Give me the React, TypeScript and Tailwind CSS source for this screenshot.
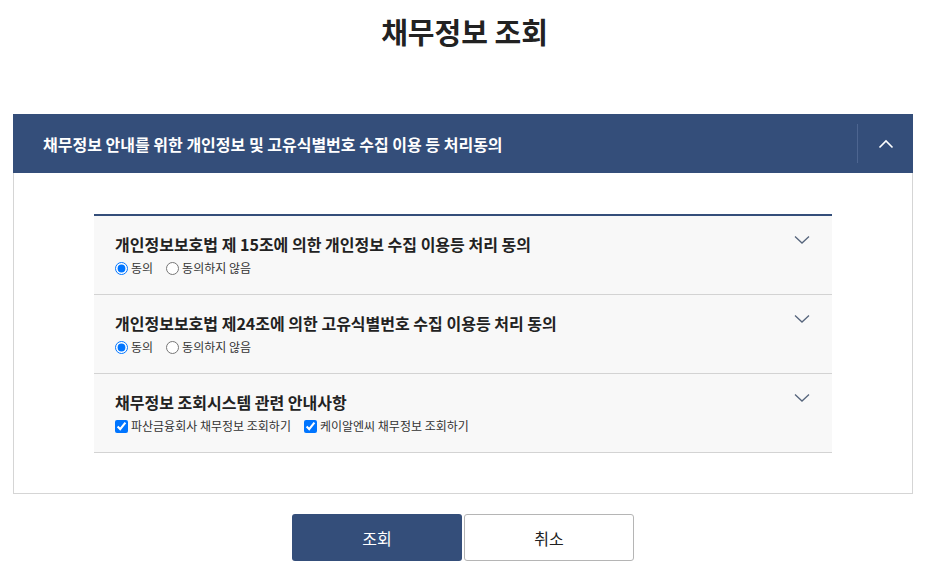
import React from 'react';

const FONT = { fontFamily: '"Noto Sans CJK KR", "Noto Sans", sans-serif' };

const ChevronDown = () => (
  <svg width="16" height="10" viewBox="0 0 16 10" fill="none" className="mt-[3px]">
    <path d="M1 1.5 L8 8 L15 1.5" stroke="#56657c" strokeWidth="1.3" />
  </svg>
);

const ChevronUp = () => (
  <svg width="16" height="10" viewBox="0 0 16 10" fill="none">
    <path d="M1.5 8.5 L8 2 L14.5 8.5" stroke="#ffffff" strokeWidth="1.6" />
  </svg>
);

const RadioRow = ({ name }: { name: string }) => (
  <div className="flex items-center mt-[2px] h-5 text-[12px] text-[#333]">
    <label className="flex items-center gap-[3px]">
      <input type="radio" name={name} defaultChecked className="m-0 w-[13px] h-[13px]" />
      <span>동의</span>
    </label>
    <label className="flex items-center gap-[3px] ml-[13px]">
      <input type="radio" name={name} className="m-0 w-[13px] h-[13px]" />
      <span>동의하지 않음</span>
    </label>
  </div>
);

const CheckRow = () => (
  <div className="flex items-center mt-[2px] h-5 text-[12px] text-[#333]">
    <label className="flex items-center gap-[3px]">
      <input type="checkbox" defaultChecked className="m-0 w-[13px] h-[13px]" />
      <span>파산금융회사 채무정보 조회하기</span>
    </label>
    <label className="flex items-center gap-[3px] ml-[13px]">
      <input type="checkbox" defaultChecked className="m-0 w-[13px] h-[13px]" />
      <span>케이알엔씨 채무정보 조회하기</span>
    </label>
  </div>
);

const Item = ({ title, children }: { title: string; children: React.ReactNode }) => (
  <div className="h-[79px] bg-[#f8f8f8] border-b border-[#d3d3d3] pl-[21px] pr-[22px] pt-[16px]">
    <div className="flex justify-between items-start">
      <h3 className="text-[16px] leading-6 font-bold text-[#222]">{title}</h3>
      <ChevronDown />
    </div>
    {children}
  </div>
);

export default function App() {
  return (
    <div className="w-full min-h-[575px] bg-white" style={FONT}>
      <h2 className="pt-[11px] h-[51px] mb-[63px] text-center text-[29px] leading-[40px] font-bold text-[#222]">
        채무정보 조회
      </h2>

      <section className="ml-[13px] w-[900px]">
        <div className="h-[59px] bg-[#344e7a] flex items-center justify-between">
          <span className="pl-[30px] text-[16px] font-bold text-white">
            채무정보 안내를 위한 개인정보 및 고유식별번호 수집 이용 등 처리동의
          </span>
          <div className="w-[56px] h-[39px] border-l border-[#4d6590] flex items-center justify-center">
            <ChevronUp />
          </div>
        </div>

        <div className="border border-t-0 border-[#d5d5d5] px-[80px] pt-[41px] pb-[40px]">
          <div className="border-t-2 border-[#344e7a]">
            <Item title="개인정보보호법 제 15조에 의한 개인정보 수집 이용등 처리 동의">
              <RadioRow name="agree1" />
            </Item>
            <Item title="개인정보보호법 제24조에 의한 고유식별번호 수집 이용등 처리 동의">
              <RadioRow name="agree2" />
            </Item>
            <Item title="채무정보 조회시스템 관련 안내사항">
              <CheckRow />
            </Item>
          </div>
        </div>
      </section>

      <div className="flex justify-center gap-[2px] mt-[20px] pr-[3px]">
        <button className="w-[170px] h-[47px] rounded-[3px] bg-[#344e7a] text-white text-[16px]">조회</button>
        <button className="w-[170px] h-[47px] rounded-[3px] bg-white border border-[#b5b5b5] text-[#222] text-[16px]">
          취소
        </button>
      </div>
    </div>
  );
}
